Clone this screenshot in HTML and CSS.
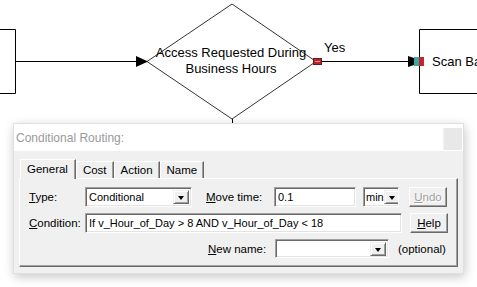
FILE: index.html
```html
<!DOCTYPE html>
<html lang="en">
<head>
    <meta charset="utf-8">
    <title>Conditional Routing</title>
    <link rel="stylesheet" href="styles.css">
</head>
<body>
    <div class="canvas">
        <svg class="flow" width="477" height="287" viewBox="0 0 477 287">
            <!-- left activity -->
            <path d="M0 29.5 H15.5 V93.5 H0" fill="none" stroke="#000"/>
            <line x1="15.5" y1="61.5" x2="138" y2="61.5" stroke="#000"/>
            <polygon points="136,56 148,61.5 136,67" fill="#000"/>

            <!-- decision -->
            <polygon points="147,61.5 232,4 316,61.5 232,119" fill="#fff" stroke="#000" stroke-width="0.8"/>
            <line x1="232.5" y1="119" x2="232.5" y2="130" stroke="#000"/>
            <text class="node-text" x="231" y="57" text-anchor="middle">Access Requested During</text>
            <text class="node-text" x="231" y="73" text-anchor="middle">Business Hours</text>

            <!-- yes branch -->
            <line x1="322" y1="61.5" x2="410" y2="61.5" stroke="#000"/>
            <rect x="313.5" y="58.5" width="8" height="6" fill="#b3262e" stroke="#6a1a1a"/>
            <line x1="315" y1="61.5" x2="320" y2="61.5" stroke="#e88" stroke-width="1"/>
            <text class="node-text" x="324" y="52">Yes</text>

            <!-- right activity, runs off the edge of the view -->
            <path d="M477 29.5 H419.5 V93.5 H477" fill="none" stroke="#000"/>
            <polygon points="408,56 414,58 414,65 408,67" fill="#000"/>
            <rect x="414" y="57" width="5" height="9" fill="#3aa7a8"/>
            <rect x="419" y="57" width="5" height="9" fill="#c0262c"/>
            <text class="node-text" x="432" y="66">Scan Ba</text>
        </svg>

        <div class="dialog">
            <div class="titlebar">
                <span class="title">Conditional Routing:</span>
                <span class="close"></span>
            </div>
            <div class="dialog-body">
                <div class="tabs">
                    <div class="tab active">General</div>
                    <div class="tab">Cost</div>
                    <div class="tab">Action</div>
                    <div class="tab">Name</div>
                </div>
                <div class="panel">
                    <div class="row">
                        <span class="label label-first"><u>T</u>ype:</span>
                        <div class="field select select-type">
                            <span>Conditional</span>
                            <span class="drop"></span>
                        </div>
                        <span class="label label-move"><u>M</u>ove time:</span>
                        <div class="field input-time">0.1</div>
                        <div class="field select select-unit">
                            <span>min</span>
                            <span class="drop"></span>
                        </div>
                        <button class="btn btn-undo" disabled><u>U</u>ndo</button>
                    </div>
                    <div class="row">
                        <span class="label label-first"><u>C</u>ondition:</span>
                        <div class="field input-cond">If v_Hour_of_Day &gt; 8 AND v_Hour_of_Day &lt; 18</div>
                        <button class="btn"><u>H</u>elp</button>
                    </div>
                    <div class="row row-name">
                        <span class="label label-new"><u>N</u>ew name:</span>
                        <div class="field select select-name">
                            <span></span>
                            <span class="drop"></span>
                        </div>
                        <span class="hint">(optional)</span>
                    </div>
                </div>
            </div>
        </div>
    </div>
</body>
</html>
```

FILE: styles.css
```css
html, body {
    margin: 0;
    padding: 0;
    background: #fff;
    overflow: hidden;
}
.canvas {
    position: relative;
    width: 477px;
    height: 287px;
    font-family: "Liberation Sans", Arial, sans-serif;
}
.flow {
    display: block;
}
.node-text {
    font-family: "Liberation Sans", Arial, sans-serif;
    font-size: 13px;
    fill: #000;
}

/* dialog floating over the diagram */
.dialog {
    position: absolute;
    left: 13px;
    top: 123px;
    width: 451px;
    background: #f0f0f0;
    box-shadow: 1px 3px 10px rgba(0, 0, 0, 0.22);
    border: 1px solid #e0e0e0;
    box-sizing: border-box;
}
.titlebar {
    height: 27px;
    background: #fff;
    display: flex;
    align-items: center;
    justify-content: space-between;
    padding-left: 2px;
    padding-right: 1px;
}
.title {
    font-size: 12px;
    color: #9a9a9a;
    margin-top: 1px;
}
.close {
    width: 18px;
    height: 22px;
    background: #e8e8e8;
    border-left: 1px solid #f4f4f4;
    margin-top: 2px;
}
.dialog-body {
    padding: 8px 5px 6px 5px;
    font-size: 11px;
    color: #000;
}
.tabs {
    display: flex;
    align-items: flex-end;
    height: 19px;
    margin-left: 1px;
    position: relative;
    z-index: 1;
}
.tab {
    height: 17px;
    line-height: 17px;
    padding: 0 6px;
    box-sizing: border-box;
    border-top: 1px solid #fff;
    border-left: 1px solid #fff;
    border-right: 1px solid #696969;
    box-shadow: inset -1px 0 0 #a0a0a0;
    background: #f0f0f0;
    font-size: 11.5px;
}
.tab.active {
    height: 20px;
    line-height: 18px;
    margin-bottom: -1px;
    padding: 0 7px 0 6px;
}
.panel {
    height: 89px;
    box-sizing: border-box;
    border-top: 1px solid #fff;
    border-left: 1px solid #fff;
    border-right: 1px solid #696969;
    border-bottom: 1px solid #696969;
    box-shadow: inset -1px -1px 0 #a0a0a0;
    padding: 8px 0 0 9px;
}
.row {
    display: flex;
    align-items: center;
    height: 20px;
    margin-bottom: 6px;
}
.row-name {
    height: 19px;
    margin-top: 1px;
}
.label {
    font-size: 11.5px;
    white-space: nowrap;
}
.label-first {
    width: 56px;
}
.label-move {
    width: 68px;
    margin-left: 14px;
}
.label-new {
    width: 67px;
    margin-left: 179px;
}
.field {
    height: 20px;
    box-sizing: border-box;
    background: #fff;
    border: 1px solid;
    border-color: #a0a0a0 #fff #fff #a0a0a0;
    box-shadow: inset 1px 1px 0 #696969, inset -1px -1px 0 #e3e3e3;
    padding: 0 0 0 3px;
    font-size: 11px;
    line-height: 18px;
    white-space: nowrap;
    overflow: hidden;
}
.select {
    display: flex;
    align-items: center;
    justify-content: space-between;
    padding-right: 2px;
}
.select-type {
    width: 107px;
}
.select-unit {
    width: 36px;
    margin-left: 7px;
    padding-left: 2px;
}
.select-name {
    width: 114px;
    height: 19px;
}
.input-time {
    width: 82px;
}
.input-cond {
    width: 317px;
}
.drop {
    width: 16px;
    height: 14px;
    flex: none;
    box-sizing: border-box;
    background: #f0f0f0;
    border: 1px solid;
    border-color: #f0f0f0 #696969 #696969 #f0f0f0;
    box-shadow: inset 1px 1px 0 #fff, inset -1px -1px 0 #a0a0a0;
    position: relative;
}
.drop::after {
    content: "";
    position: absolute;
    left: 4px;
    top: 5px;
    border-left: 3.5px solid transparent;
    border-right: 3.5px solid transparent;
    border-top: 4px solid #000;
}
.btn {
    margin-left: 8px;
    width: 38px;
    height: 20px;
    box-sizing: border-box;
    background: #f0f0f0;
    border: 1px solid;
    border-color: #fff #696969 #696969 #fff;
    box-shadow: inset -1px -1px 0 #a0a0a0;
    font-family: "Liberation Sans", Arial, sans-serif;
    font-size: 11.5px;
    color: #000;
    padding: 0;
}
.btn:disabled {
    color: #a0a0a0;
    text-shadow: 1px 1px 0 #fff;
}
.btn-undo {
    margin-left: 10px;
}
.hint {
    margin-left: 9px;
    font-size: 11.5px;
}
```
